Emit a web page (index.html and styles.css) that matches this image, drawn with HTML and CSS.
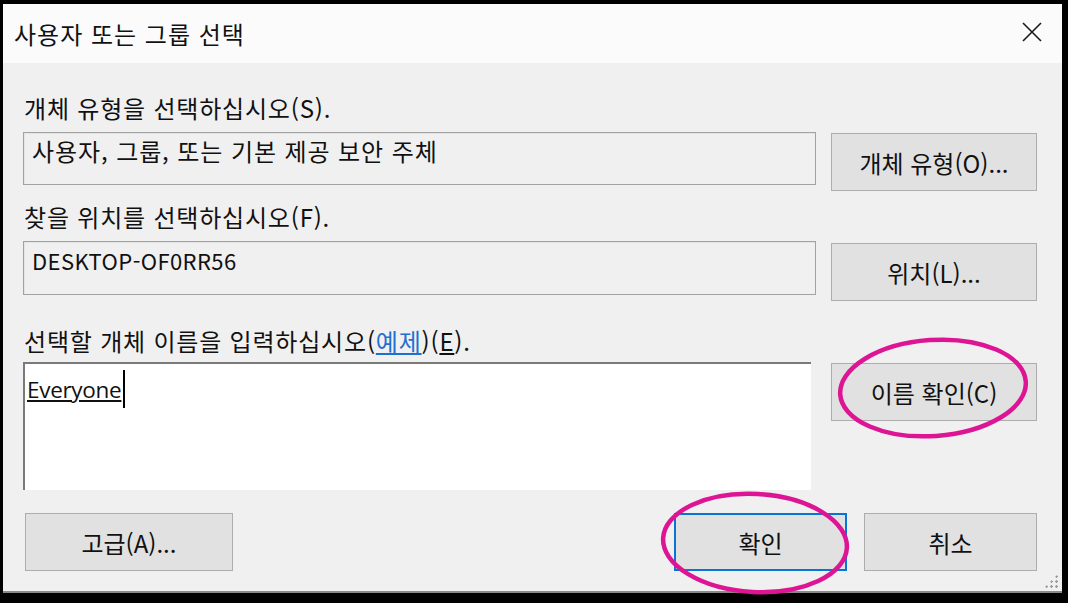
FILE: index.html
```html
<!DOCTYPE html>
<html lang="ko">
<head>
<meta charset="utf-8">
<title>사용자 또는 그룹 선택</title>
<link rel="stylesheet" href="styles.css">
</head>
<body>
<div class="dialog">
  <div class="titlebar">
    <span class="title">사용자 또는 그룹 선택</span>
    <svg class="close" width="22" height="22" viewBox="0 0 22 22"><path d="M2 2 L20 20 M20 2 L2 20" stroke="#1a1a1a" stroke-width="1.6" fill="none"/></svg>
  </div>
  <div class="content">
    <div class="label l1">개체 유형을 선택하십시오(S).</div>
    <div class="row r1">
      <div class="field">사용자, 그룹, 또는 기본 제공 보안 주체</div>
      <div class="btn">개체 유형(O)...</div>
    </div>
    <div class="label l2">찾을 위치를 선택하십시오(F).</div>
    <div class="row r2">
      <div class="field"><span class="latin">DESKTOP-OF0RR56</span></div>
      <div class="btn b2">위치(L)...</div>
    </div>
    <div class="label l3">선택할 개체 이름을 입력하십시오(<span class="link">예제</span>)(<u>E</u>).</div>
    <div class="row r3">
      <div class="textarea"><span class="entry">Everyone</span><span class="caret"></span></div>
      <div class="btn b3">이름 확인(C)</div>
    </div>
    <div class="footer">
      <div class="btn wide">고급(A)...</div>
      <div class="spacer"></div>
      <div class="btn small default">확인</div>
      <div class="btn small">취소</div>
    </div>
  </div>
  <div class="grip"></div>
</div>
<svg class="marks" width="1068" height="603" viewBox="0 0 1068 603">
  <ellipse cx="933" cy="388" rx="93" ry="48" transform="rotate(-4 933 388)" fill="none" stroke="#dd1594" stroke-width="4.5"/>
  <ellipse cx="755" cy="543" rx="92" ry="49" transform="rotate(3 755 543)" fill="none" stroke="#dd1594" stroke-width="4.5"/>
</svg>
</body>
</html>
```
FILE: styles.css
```css
html, body {
  margin: 0;
  padding: 0;
  background: #000;
  width: 1068px;
  height: 603px;
  overflow: hidden;
}
body {
  position: relative;
  font-family: "Noto Sans CJK KR", "Noto Sans", sans-serif;
  color: #111;
}
.dialog {
  position: relative;
  margin: 4px 0 0 3px;
  width: 1059px;
  height: 589px;
  background: #f0f0f0;
  box-sizing: border-box;
  border-bottom: 2px solid #8a8a8a;
  display: flex;
  flex-direction: column;
}
.titlebar {
  height: 59px;
  background: #fbfbfb;
  display: flex;
  align-items: center;
  justify-content: space-between;
  padding: 0 19px 0 11px;
  flex: none;
}
.title {
  font-size: 24px;
  line-height: 30px;
  letter-spacing: 1px;
}
.close { margin-bottom: 4px; }
.content {
  padding: 31px 25px 0 20px;
  display: flex;
  flex-direction: column;
}
.label {
  font-size: 24px;
  line-height: 27px;
  height: 27px;
  padding-left: 1px;
  white-space: nowrap;
  letter-spacing: 0.8px;
}
.l2 { margin-top: 12px; }
.l3 { margin-top: 26px; }
.link {
  color: #1e6fd0;
  text-decoration: underline;
  text-decoration-color: #1e6fd0;
}
.row {
  display: flex;
  align-items: flex-start;
  gap: 15px;
  margin-top: 11px;
}
.r3 { margin-top: 8px; }
.field {
  flex: 1;
  height: 54px;
  box-sizing: border-box;
  border: 1px solid #a2a2a2;
  box-shadow: inset 1px 1px 0 #e4e4e4;
  font-size: 24px;
  line-height: 36px;
  padding: 0 8px;
  white-space: nowrap;
  letter-spacing: 0.9px;
}
.latin { font-size: 22px; letter-spacing: 0.4px; }
.r1 .field { height: 53px; }
.btn {
  width: 206px;
  height: 58px;
  box-sizing: border-box;
  background: #e1e1e1;
  border: 1px solid #adadad;
  display: flex;
  align-items: center;
  justify-content: center;
  font-size: 24px;
  flex: none;
  margin-top: 1px;
  white-space: nowrap;
}
.b2 { margin-top: 2px; }
.textarea {
  flex: 1;
  margin-right: 5px;
  height: 128px;
  background: #fff;
  border-top: 2px solid #7a7a7a;
  border-left: 2px solid #7a7a7a;
  box-sizing: border-box;
  display: flex;
  align-items: flex-start;
  padding: 6px 0 0 2px;
}
.entry {
  font-family: "Open Sans", "Noto Sans", sans-serif;
  font-size: 22.5px;
  line-height: 40px;
  text-decoration: underline;
  letter-spacing: -0.3px;
}
.caret {
  width: 2px;
  height: 38px;
  background: #000;
  margin-left: 2px;
}
.footer {
  display: flex;
  margin-top: 23px;
  padding-left: 2px;
  gap: 17px;
}
.footer .btn { margin-top: 0; }
.wide { width: 208px; }
.spacer { flex: 1; }
.small { width: 173px; }
.default {
  border: 2px solid #0a74d6;
}
.grip {
  position: absolute;
  right: 4px;
  bottom: 3px;
  width: 14px;
  height: 14px;
  background:
    radial-gradient(circle, #9a9a9a 1px, transparent 1.5px) 0 0 / 5px 5px;
  clip-path: polygon(100% 0, 100% 100%, 0 100%);
}
.marks {
  position: absolute;
  left: 0;
  top: 0;
  pointer-events: none;
}
```
